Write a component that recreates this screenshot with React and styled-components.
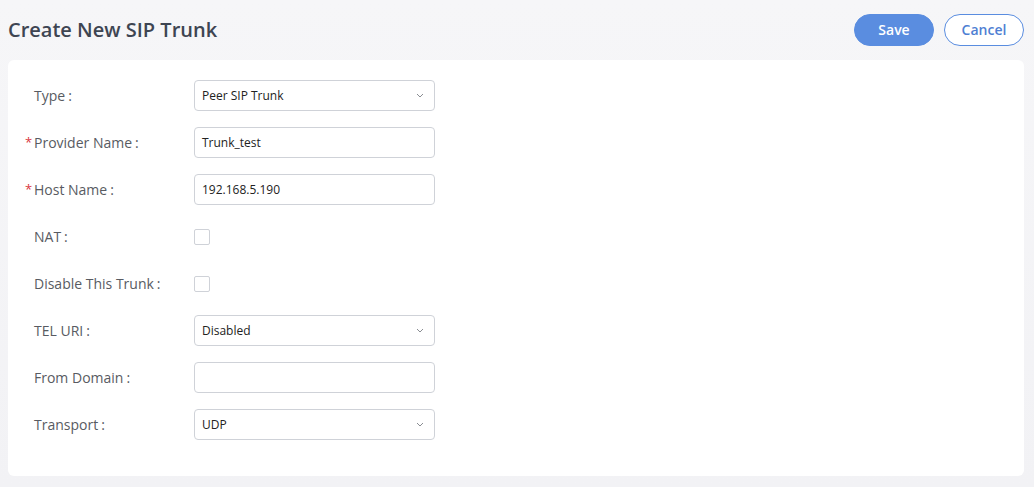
import React from "react";
import styled, { createGlobalStyle } from "styled-components";

const GlobalStyle = createGlobalStyle`
  html, body { margin: 0; padding: 0; background: #f3f3f6; }
  body { font-family: "Open Sans", "Noto Sans", sans-serif; }
  * { box-sizing: border-box; }
`;

const Page = styled.div`
  width: 1034px;
  height: 487px;
  padding: 0 10px 0 8px;
  background: linear-gradient(#f6f6f8, #f2f2f5);
`;

const Header = styled.div`
  height: 60px;
  display: flex;
  align-items: center;
  justify-content: space-between;
`;

const Title = styled.h1`
  margin: 0;
  font-size: 20px;
  font-weight: 600;
  color: #3e4552;
  line-height: 1;
  padding-bottom: 1px;
`;

const Actions = styled.div`
  display: flex;
  gap: 10px;
  padding-bottom: 1px;
`;

const Button = styled.button`
  width: 80px;
  height: 32px;
  border-radius: 16px;
  font-family: "Open Sans", "Noto Sans", sans-serif;
  font-size: 14px;
  font-weight: 600;
  cursor: pointer;
  border: 1px solid #5a8de0;
  background: ${p => (p.$primary ? "#5a8de0" : "#ffffff")};
  color: ${p => (p.$primary ? "#ffffff" : "#4f7fd3")};
  padding: 0;
`;

const Card = styled.div`
  background: #ffffff;
  border-radius: 6px;
  padding: 20px 26px 36px;
  display: flex;
  flex-direction: column;
  gap: 16px;
`;

const Row = styled.div`
  display: flex;
  align-items: center;
  height: 31px;
`;

const Label = styled.label`
  position: relative;
  width: 160px;
  font-size: 14px;
  color: #585b62;
  display: flex;
  align-items: center;
`;

const Required = styled.span`
  position: absolute;
  left: -9px;
  top: 0px;
  color: #d9363e;
  font-size: 13px;
`;

const Colon = styled.span`
  margin-left: 3px;
`;

const Field = styled.div`
  width: 241px;
  height: 31px;
  border: 1px solid #cfd2d8;
  border-radius: 4px;
  display: flex;
  align-items: center;
  justify-content: space-between;
  padding: 0 10px 0 7px;
  font-size: 12px;
  color: #222;
  background: #fff;
`;

const Check = styled.div`
  width: 16px;
  height: 16px;
  border: 1px solid #cfd2d8;
  border-radius: 2px;
  background: #fff;
`;

const Chevron = () => (
  <svg width="8" height="5" viewBox="0 0 8 5" fill="none">
    <path d="M1 1l3 3 3-3" stroke="#8a8d93" strokeWidth="1" />
  </svg>
);

const rows = [
  { label: "Type", kind: "select", value: "Peer SIP Trunk" },
  { label: "Provider Name", kind: "input", value: "Trunk_test", required: true },
  { label: "Host Name", kind: "input", value: "192.168.5.190", required: true },
  { label: "NAT", kind: "check" },
  { label: "Disable This Trunk", kind: "check" },
  { label: "TEL URI", kind: "select", value: "Disabled" },
  { label: "From Domain", kind: "input", value: "" },
  { label: "Transport", kind: "select", value: "UDP" },
];

export default function App() {
  return (
    <>
      <GlobalStyle />
      <Page>
        <Header>
          <Title>Create New SIP Trunk</Title>
          <Actions>
            <Button $primary>Save</Button>
            <Button>Cancel</Button>
          </Actions>
        </Header>
        <Card>
          {rows.map(r => (
            <Row key={r.label}>
              <Label>
                {r.required && <Required>*</Required>}
                {r.label}
                <Colon>:</Colon>
              </Label>
              {r.kind === "check" ? (
                <Check />
              ) : (
                <Field>
                  <span>{r.value}</span>
                  {r.kind === "select" && <Chevron />}
                </Field>
              )}
            </Row>
          ))}
        </Card>
      </Page>
    </>
  );
}
